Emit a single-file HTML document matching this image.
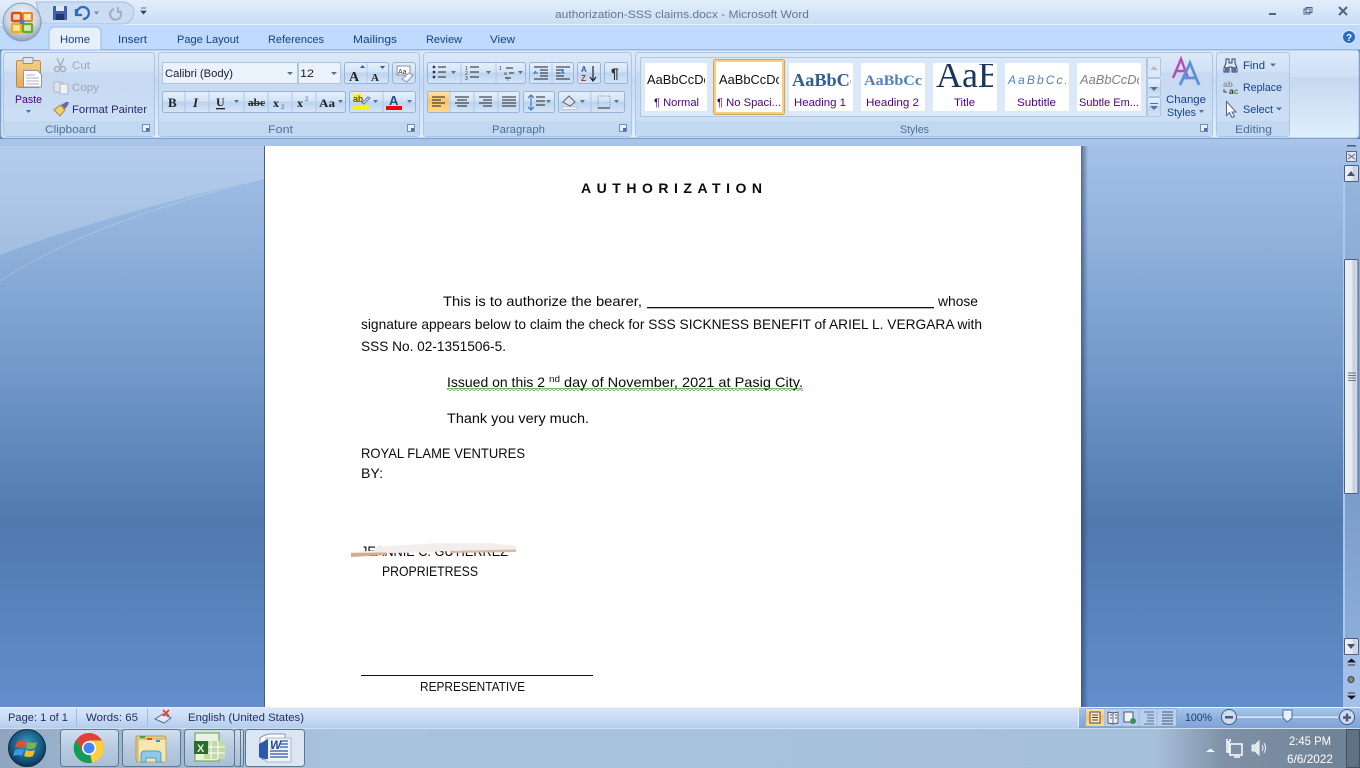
<!DOCTYPE html>
<html><head><meta charset="utf-8"><title>authorization-SSS claims.docx - Microsoft Word</title>
<style>
html,body{margin:0;padding:0;background:#5d87c0;overflow:hidden}
svg{display:block;position:absolute;left:0;top:0}
text{font-family:"Liberation Sans",sans-serif;white-space:pre}
.r{font-size:11px;fill:#15428b}
.k{font-size:11px;fill:#2a2a6e}
.m{font-size:11px;fill:#4b0082}
.c{font-size:11px;fill:#4d6f9f}
.g{font-size:11px;fill:#9aa6b5}
.d{font-size:14px;fill:#0a0a0a}
.s{font-size:11px;fill:#23305e}
</style></head><body>
<svg width="1360" height="768" viewBox="0 0 1360 768" xmlns="http://www.w3.org/2000/svg">
<defs>
<clipPath id="c1"><rect x="645" y="63" width="60" height="48"/></clipPath>
<clipPath id="c2"><rect x="717" y="63" width="62" height="48"/></clipPath>
<clipPath id="c3"><rect x="789" y="63" width="62" height="48"/></clipPath>
<clipPath id="c4"><rect x="933" y="64" width="60" height="47"/></clipPath>
<clipPath id="c5"><rect x="1005" y="63" width="61" height="48"/></clipPath>
<clipPath id="c6"><rect x="1077" y="63" width="62" height="48"/></clipPath>
<linearGradient id="tb" x1="0" y1="0" x2="0" y2="1"><stop offset="0" stop-color="#e3eefb"/><stop offset="1" stop-color="#c9dcf5"/></linearGradient>
<linearGradient id="bg" x1="0" y1="0" x2="0" y2="1"><stop offset="0" stop-color="#a3c0e8"/><stop offset=".1" stop-color="#98b8e1"/><stop offset=".4" stop-color="#7299c9"/><stop offset=".67" stop-color="#5079af"/><stop offset=".72" stop-color="#527cb3"/><stop offset="1" stop-color="#628ecb"/></linearGradient>
<linearGradient id="track" x1="0" y1="0" x2="0" y2="1"><stop offset="0" stop-color="#94b3dd"/><stop offset=".7" stop-color="#7b9dca"/><stop offset="1" stop-color="#8dadd8"/></linearGradient>
<linearGradient id="rb" x1="0" y1="0" x2="0" y2="1"><stop offset="0" stop-color="#dce9f9"/><stop offset=".3" stop-color="#cfe0f5"/><stop offset=".32" stop-color="#c5d8f0"/><stop offset="1" stop-color="#dff0fb"/></linearGradient>
<linearGradient id="gp" x1="0" y1="0" x2="0" y2="1"><stop offset="0" stop-color="#dbe8f8"/><stop offset=".22" stop-color="#d2e2f6"/><stop offset=".25" stop-color="#c6d9f1"/><stop offset="1" stop-color="#cfe0f5"/></linearGradient>
<linearGradient id="btn" x1="0" y1="0" x2="0" y2="1"><stop offset="0" stop-color="#e6f0fb"/><stop offset=".45" stop-color="#d3e3f7"/><stop offset=".5" stop-color="#bdd3ee"/><stop offset="1" stop-color="#d5e5f8"/></linearGradient>
<linearGradient id="org" x1="0" y1="0" x2="0" y2="1"><stop offset="0" stop-color="#fde3a8"/><stop offset=".45" stop-color="#fbc469"/><stop offset="1" stop-color="#fdd98a"/></linearGradient>
<linearGradient id="st" x1="0" y1="0" x2="0" y2="1"><stop offset="0" stop-color="#dbe8f9"/><stop offset=".5" stop-color="#c9dcf5"/><stop offset="1" stop-color="#b4cdee"/></linearGradient>
<linearGradient id="st2" x1="0" y1="0" x2="0" y2="1"><stop offset="0" stop-color="#a9c4e8"/><stop offset=".5" stop-color="#8fb0dd"/><stop offset="1" stop-color="#7fa3d6"/></linearGradient>
<linearGradient id="task" x1="0" y1="0" x2="1" y2="0"><stop offset="0" stop-color="#8ea5bd"/><stop offset=".05" stop-color="#9bb3cd"/><stop offset=".25" stop-color="#a9c2dd"/><stop offset=".85" stop-color="#a7c0da"/><stop offset=".9" stop-color="#7e91a6"/><stop offset="1" stop-color="#6e8093"/></linearGradient>
<linearGradient id="tbtn" x1="0" y1="0" x2="0" y2="1"><stop offset="0" stop-color="#cfdff0"/><stop offset=".5" stop-color="#b7cbe0"/><stop offset="1" stop-color="#a8bfd8"/></linearGradient>
<linearGradient id="thumb" x1="0" y1="0" x2="1" y2="0"><stop offset="0" stop-color="#eef1f7"/><stop offset=".55" stop-color="#e4e9f2"/><stop offset=".65" stop-color="#c6d0de"/><stop offset="1" stop-color="#d6dde9"/></linearGradient>
<linearGradient id="pst" x1="0" y1="0" x2="0" y2="1"><stop offset="0" stop-color="#f5cf86"/><stop offset="1" stop-color="#e8a957"/></linearGradient>
<radialGradient id="orb" cx=".5" cy=".35" r=".7"><stop offset="0" stop-color="#f5f7fb"/><stop offset=".6" stop-color="#c9d4e3"/><stop offset="1" stop-color="#8494a8"/></radialGradient>
<radialGradient id="sorb" cx=".5" cy=".4" r=".6"><stop offset="0" stop-color="#3f9cc4"/><stop offset=".7" stop-color="#15577f"/><stop offset="1" stop-color="#0c3352"/></radialGradient>
<pattern id="sq" width="4" height="3" patternUnits="userSpaceOnUse"><path d="M0 2.500L2 .5L4 2.500" fill="none" stroke="#3f9a3f" stroke-width="1"/></pattern>
<linearGradient id="shd" x1="0" y1="0" x2="1" y2="0"><stop offset="0" stop-color="#2c4060" stop-opacity=".65"/><stop offset="1" stop-color="#2c4060" stop-opacity="0"/></linearGradient>
</defs>

<!-- title and tabs -->
<rect width="1360" height="25" fill="url(#tb)"/>
<rect y="24" width="1360" height="1" fill="#e6f0fc"/>
<rect y="25" width="1360" height="25" fill="#bfdafc"/>
<rect y="49" width="1360" height="1" fill="#8db2e3"/>
<rect x="1" y="50" width="1358" height="88" rx="3" fill="url(#rb)" stroke="#9cbde8"/>
<rect y="139" width="1360" height="7" fill="#a9c4e8"/>

<text x="555" y="18" font-size="11" fill="#66758c" textLength="254" lengthAdjust="spacingAndGlyphs">authorization-SSS claims.docx - Microsoft Word</text>

<!-- window buttons -->
<rect x="1269" y="13" width="7" height="2" fill="#4e6684"/>
<rect x="1304" y="9" width="6" height="5" fill="none" stroke="#4e6684"/><rect x="1306" y="7.500" width="6" height="5" fill="none" stroke="#4e6684"/>
<path d="M1339 7L1347 15M1347 7L1339 15" stroke="#4e6684" stroke-width="2"/>
<circle cx="1349" cy="37" r="6.500" fill="#2a6cc4" stroke="#d8e6f8"/><text x="1346" y="41" font-size="10" font-weight="bold" fill="#fff">?</text>

<!-- quick access -->
<path d="M36 2H122a12 10 0 0 1 12 10a12 12 0 0 1-12 12H42Z" fill="#cbdcf3" stroke="#a5c0e2"/>
<rect x="53" y="6" width="14" height="14" rx="1" fill="#3f5fa8"/><rect x="56" y="6" width="8" height="5" fill="#dfe8f5"/><rect x="56" y="14" width="8" height="6" fill="#22356b"/>
<path d="M77 14a6 6 0 1 1 6 5M76 9v6h6" fill="none" stroke="#2f6ac0" stroke-width="2.200"/>
<path d="M94 11.500h5l-2.500 3Z" fill="#6b83a4"/>
<path d="M120 11a5.500 5.500 0 1 1-6-2M118 7v5h4" fill="none" stroke="#9db0c8" stroke-width="2"/>
<path d="M141 8h5M141 11h5l-2.500 3Z" fill="#2f4770" stroke="#2f4770" stroke-width=".8"/>

<!-- office button -->
<circle cx="22" cy="22" r="19" fill="url(#orb)" stroke="#8a9ab0"/>
<rect x="12" y="13" width="9" height="8" rx="1" fill="#f7d7b0" stroke="#d9501e" stroke-width="2.400"/>
<rect x="23" y="13" width="9" height="8" rx="1" fill="#fbe3b5" stroke="#e8871a" stroke-width="2"/>
<rect x="12" y="24" width="9" height="8" rx="1" fill="#fbe8a8" stroke="#efb01c" stroke-width="2.400"/>
<rect x="23" y="24" width="9" height="8" rx="1" fill="#d5e8b0" stroke="#6aa82c" stroke-width="2.200"/>
<circle cx="22" cy="22" r="2.500" fill="#3c82c8"/>

<!-- tabs -->
<path d="M49 50V32a5 5 0 0 1 5-5h42a5 5 0 0 1 5 5v18Z" fill="#e5f0fb" stroke="#98bbe6"/>
<text class="r" x="60" y="43" textLength="30" lengthAdjust="spacingAndGlyphs">Home</text>
<text class="r" x="118" y="43" textLength="29" lengthAdjust="spacingAndGlyphs">Insert</text>
<text class="r" x="177" y="43" textLength="62" lengthAdjust="spacingAndGlyphs">Page Layout</text>
<text class="r" x="268" y="43" textLength="56" lengthAdjust="spacingAndGlyphs">References</text>
<text class="r" x="353" y="43" textLength="44" lengthAdjust="spacingAndGlyphs">Mailings</text>
<text class="r" x="426" y="43" textLength="36" lengthAdjust="spacingAndGlyphs">Review</text>
<text class="r" x="490" y="43" textLength="25" lengthAdjust="spacingAndGlyphs">View</text>

<!-- groups -->
<g stroke="#a9c7e8" fill="url(#gp)">
<rect x="3.500" y="52.500" width="151" height="84" rx="3"/>
<rect x="158.500" y="52.500" width="261" height="84" rx="3"/>
<rect x="423.500" y="52.500" width="208" height="84" rx="3"/>
<rect x="635.500" y="52.500" width="577" height="84" rx="3"/>
<rect x="1216.500" y="52.500" width="73" height="84" rx="3"/>
</g>
<g fill="#c2d8f0">
<rect x="4" y="121" width="150" height="15"/><rect x="159" y="121" width="260" height="15"/><rect x="424" y="121" width="207" height="15"/><rect x="636" y="121" width="576" height="15"/><rect x="1217" y="121" width="72" height="15"/>
</g>
<text class="c" x="45" y="133" textLength="51" lengthAdjust="spacingAndGlyphs">Clipboard</text>
<text class="c" x="268" y="133" textLength="25" lengthAdjust="spacingAndGlyphs">Font</text>
<text class="c" x="492" y="133" textLength="53" lengthAdjust="spacingAndGlyphs">Paragraph</text>
<text class="c" x="900" y="133" textLength="29" lengthAdjust="spacingAndGlyphs">Styles</text>
<text class="c" x="1235" y="133" textLength="37" lengthAdjust="spacingAndGlyphs">Editing</text>
<g fill="#e8f0fa" stroke="#6f8fb8">
<rect x="142.500" y="124.500" width="7" height="7"/><rect x="407.500" y="124.500" width="7" height="7"/><rect x="619.500" y="124.500" width="7" height="7"/><rect x="1200.500" y="124.500" width="7" height="7"/>
</g>
<g fill="#4f6f9c"><rect x="146" y="128" width="3" height="3"/><rect x="411" y="128" width="3" height="3"/><rect x="623" y="128" width="3" height="3"/><rect x="1204" y="128" width="3" height="3"/></g>

<!-- clipboard -->
<rect x="16.500" y="60.500" width="24" height="27" rx="2" fill="url(#pst)" stroke="#b88a45"/>
<rect x="23" y="57.500" width="10" height="6" rx="1" fill="#e2e6ec" stroke="#8a8f99"/>
<path d="M23.500 70.500h14l4 4v12.500h-18Z" fill="#fff" stroke="#8e97a6"/>
<path d="M26 75h9M26 78h13M26 81h13M26 84h13" stroke="#aab2be"/>
<text class="m" x="15" y="103" textLength="27" lengthAdjust="spacingAndGlyphs">Paste</text>
<path d="M26 110h5l-2.500 3Z" fill="#4d6f9f"/>
<path d="M57 58l4 9M64 58l-4 9" stroke="#a6aebb" stroke-width="1.400"/><circle cx="57" cy="69" r="2.500" fill="none" stroke="#a6aebb" stroke-width="1.400"/><circle cx="63" cy="69" r="2.500" fill="none" stroke="#a6aebb" stroke-width="1.400"/>
<text class="g" x="72" y="69" textLength="18" lengthAdjust="spacingAndGlyphs">Cut</text>
<rect x="54" y="82" width="8" height="10" fill="#e0e6ef" stroke="#adb6c3"/><rect x="60" y="84" width="8" height="10" fill="#eef1f6" stroke="#adb6c3"/>
<text class="g" x="72" y="91" textLength="27" lengthAdjust="spacingAndGlyphs">Copy</text>
<path d="M54 110l6-5 5 5-5 6q-3-3-6-6Z" fill="#edd27a" stroke="#a98c3c"/><path d="M61 105l5-3 3 0-1 3-3 4Z" fill="#6a67a8"/>
<text class="k" x="72" y="113" textLength="75" lengthAdjust="spacingAndGlyphs">Format Painter</text>

<!-- font -->
<rect x="162.500" y="62.500" width="135" height="21" fill="#eaf2fc" stroke="#adc6e5"/>
<rect x="298.500" y="62.500" width="42" height="21" fill="#eaf2fc" stroke="#adc6e5"/>
<text x="165" y="77" font-size="11" fill="#1b1b3c" textLength="68" lengthAdjust="spacingAndGlyphs">Calibri (Body)</text>
<text x="300" y="77" font-size="11" fill="#1b1b3c" textLength="14" lengthAdjust="spacingAndGlyphs">12</text>
<path d="M287 72h6l-3 3ZM331 72h6l-3 3Z" fill="#56708f"/>
<rect x="344.500" y="62.500" width="44" height="21" rx="2" fill="url(#btn)" stroke="#97b4d9"/>
<line x1="367" y1="63" x2="367" y2="83" stroke="#adc6e5"/>
<text x="349" y="81" font-size="14" font-weight="bold" style="font-family:'Liberation Serif',serif" fill="#222">A</text>
<text x="371" y="81" font-size="11" font-weight="bold" style="font-family:'Liberation Serif',serif" fill="#222">A</text>
<path d="M360 68h5l-2.500-3ZM380 66h5l-2.500 3Z" fill="#335b92"/>
<rect x="392.500" y="62.500" width="23" height="21" rx="3" fill="url(#btn)" stroke="#97b4d9"/>
<rect x="397" y="66" width="13" height="9" fill="#fff" stroke="#8791a0"/><text x="398" y="74" font-size="7" fill="#333">Aa</text>
<path d="M402 79l7-6 4 2-6 7Z" fill="#f3f5f8" stroke="#8f9aa8"/>

<rect x="162.500" y="91.500" width="183" height="21" rx="2" fill="url(#btn)" stroke="#97b4d9"/>
<g stroke="#adc6e5"><line x1="185" y1="92" x2="185" y2="112"/><line x1="209" y1="92" x2="209" y2="112"/><line x1="244" y1="92" x2="244" y2="112"/><line x1="268" y1="92" x2="268" y2="112"/><line x1="292" y1="92" x2="292" y2="112"/><line x1="316" y1="92" x2="316" y2="112"/></g>
<g fill="#222">
<text x="168" y="107" font-size="13" font-weight="bold" style="font-family:'Liberation Serif',serif">B</text>
<text x="193" y="107" font-size="13" font-weight="bold" font-style="italic" style="font-family:'Liberation Serif',serif">I</text>
<text x="216" y="106" font-size="12" font-weight="bold" style="font-family:'Liberation Serif',serif">U</text>
<text x="248" y="106" font-size="11" font-weight="bold" style="font-family:'Liberation Serif',serif" textLength="17" lengthAdjust="spacingAndGlyphs">abc</text>
<text x="273" y="107" font-size="12" font-weight="bold" style="font-family:'Liberation Serif',serif">x</text>
<text x="281" y="109" font-size="6" fill="#3a5f9a">2</text>
<text x="297" y="107" font-size="12" font-weight="bold" style="font-family:'Liberation Serif',serif">x</text>
<text x="305" y="101" font-size="6" fill="#3a5f9a">2</text>
<text x="319" y="107" font-size="12" font-weight="bold" style="font-family:'Liberation Serif',serif" textLength="16" lengthAdjust="spacingAndGlyphs">Aa</text>
</g>
<rect x="216" y="108" width="9" height="1.300" fill="#222"/><rect x="248" y="103" width="17" height="1" fill="#333"/>
<path d="M234 100h5l-2.500 3ZM338 100h5l-2.500 3Z" fill="#56708f"/>
<rect x="349.500" y="91.500" width="66" height="21" rx="2" fill="url(#btn)" stroke="#97b4d9"/>
<line x1="383" y1="92" x2="383" y2="112" stroke="#adc6e5"/>
<rect x="353" y="94" width="9" height="8" fill="#f6ee4a"/><text x="353" y="102" font-size="9" fill="#222">ab</text><path d="M362 103l6-6 2 1-6 6Z" fill="#dfe5ee" stroke="#6b7c95"/>
<rect x="353" y="106" width="16" height="4" fill="#f5f500"/>
<path d="M373 100h5l-2.500 3ZM407 100h5l-2.500 3Z" fill="#56708f"/>
<text x="389" y="105" font-size="13" font-weight="bold" fill="#1f4a8c">A</text>
<rect x="386" y="106" width="16" height="4" fill="#f00"/>

<!-- paragraph -->
<rect x="427.500" y="62.500" width="98" height="21" rx="2" fill="url(#btn)" stroke="#97b4d9"/>
<line x1="461" y1="63" x2="461" y2="83" stroke="#adc6e5"/><line x1="496" y1="63" x2="496" y2="83" stroke="#adc6e5"/>
<g fill="#1f3864"><circle cx="434" cy="67" r="1.400"/><circle cx="434" cy="72" r="1.400"/><circle cx="434" cy="77" r="1.400"/></g>
<path d="M438 67h8M438 72h8M438 77h8M470 67h9M470 72h9M470 77h9M506 68h7M509 73h5M505 78h6" stroke="#222" stroke-width="1.100"/>
<text x="465" y="70" font-size="5" fill="#334">1</text><text x="465" y="75" font-size="5" fill="#334">2</text><text x="465" y="80" font-size="5" fill="#334">3</text>
<text x="499" y="70" font-size="5" fill="#334">1</text><text x="504" y="75" font-size="5" fill="#334">a</text><text x="507" y="81" font-size="5" fill="#334">i</text>
<path d="M451 71h5l-2.500 3ZM486 71h5l-2.500 3ZM518 71h5l-2.500 3Z" fill="#56708f"/>
<rect x="529.500" y="62.500" width="44" height="21" rx="2" fill="url(#btn)" stroke="#97b4d9"/><line x1="552" y1="63" x2="552" y2="83" stroke="#adc6e5"/>
<path d="M534 67h14M540 70h8M540 73h8M540 76h8M534 79h14M556 67h14M556 70h8M556 73h8M556 76h8M556 79h14" stroke="#222" stroke-width="1.100"/>
<path d="M538 73h-4l2-2M560 73h4l-2-2" stroke="#2a6cc4" fill="none"/>
<rect x="577.500" y="62.500" width="23" height="21" rx="2" fill="url(#btn)" stroke="#97b4d9"/>
<text x="581" y="72" font-size="8" font-weight="bold" fill="#2a5fb0">A</text><text x="581" y="81" font-size="8" font-weight="bold" fill="#9d3a2b">Z</text>
<path d="M593 66v14M590 77l3 4 3-4" fill="none" stroke="#222" stroke-width="1.200"/>
<rect x="604.500" y="62.500" width="23" height="21" rx="2" fill="url(#btn)" stroke="#97b4d9"/>
<text x="611" y="78" font-size="14" font-weight="bold" fill="#333">¶</text>

<rect x="427.500" y="91.500" width="92" height="21" rx="2" fill="url(#btn)" stroke="#97b4d9"/>
<rect x="428" y="92" width="21" height="20" fill="url(#org)"/>
<path d="M432 97h13M432 100h9M432 103h13M432 106h9" stroke="#222"/>
<path d="M455 97h14M457 100h10M455 103h14M457 106h10" stroke="#222"/>
<path d="M479 97h13M483 100h9M479 103h13M483 106h9" stroke="#222"/>
<path d="M502 97h14M502 100h14M502 103h14M502 106h14" stroke="#222"/>
<line x1="450" y1="92" x2="450" y2="112" stroke="#adc6e5"/><line x1="474" y1="92" x2="474" y2="112" stroke="#adc6e5"/><line x1="498" y1="92" x2="498" y2="112" stroke="#adc6e5"/>
<rect x="523.500" y="91.500" width="31" height="21" rx="2" fill="url(#btn)" stroke="#97b4d9"/>
<path d="M531 95v15M528 98l3-3 3 3M528 107l3 3 3-3" fill="none" stroke="#2a6cc4"/><path d="M536 97h9M536 101h9M536 105h9" stroke="#222"/>
<path d="M546 100h5l-2.500 3Z" fill="#56708f"/>
<rect x="558.500" y="91.500" width="66" height="21" rx="2" fill="url(#btn)" stroke="#97b4d9"/><line x1="591" y1="92" x2="591" y2="112" stroke="#adc6e5"/>
<path d="M563 102l6-6 6 6-5 4Z" fill="#dfe5ee" stroke="#5a6676"/><rect x="562" y="107" width="15" height="2.500" fill="#fff" stroke="#9aa6b5" stroke-width=".6"/>
<path d="M580 100h5l-2.500 3ZM614 100h5l-2.500 3Z" fill="#56708f"/>
<rect x="598" y="96" width="12" height="12" fill="none" stroke="#8a94a2" stroke-dasharray="1 1"/><line x1="598" y1="108" x2="610" y2="108" stroke="#222"/>

<!-- styles -->
<rect x="640.500" y="57.500" width="506" height="59" fill="#dbe8f8" stroke="#adc6e5"/>
<g fill="#fff">
<rect x="645" y="63" width="62" height="48"/><rect x="789" y="63" width="64" height="48"/><rect x="861" y="63" width="64" height="48"/><rect x="933" y="63" width="64" height="48"/><rect x="1005" y="63" width="64" height="48"/><rect x="1077" y="63" width="64" height="48"/>
</g>
<rect x="713.500" y="59.500" width="71" height="55" rx="2" fill="#fff" stroke="#c9a560" stroke-width="1"/>
<rect x="715" y="61" width="68" height="52" rx="1" fill="none" stroke="#fbcf78" stroke-width="2"/>
<text x="647" y="84" font-size="12.500" fill="#111" textLength="63" lengthAdjust="spacingAndGlyphs" clip-path="url(#c1)">AaBbCcDc</text>
<text x="719" y="84" font-size="12.500" fill="#111" textLength="63" lengthAdjust="spacingAndGlyphs" clip-path="url(#c2)">AaBbCcDc</text>
<text x="792" y="86" font-size="18" font-weight="bold" fill="#2f5d96" style="font-family:'Liberation Serif',serif" textLength="66" lengthAdjust="spacingAndGlyphs" clip-path="url(#c3)">AaBbCc</text>
<text x="864" y="85" font-size="15" font-weight="bold" fill="#4f81bd" style="font-family:'Liberation Serif',serif" textLength="58" lengthAdjust="spacingAndGlyphs">AaBbCc</text>
<text x="936" y="87" font-size="36" fill="#17365d" style="font-family:'Liberation Serif',serif" clip-path="url(#c4)">AaB</text>
<text x="1008" y="84" font-size="12" font-style="italic" fill="#4f81bd" textLength="60" clip-path="url(#c5)">AaBbCc.</text>
<text x="1080" y="84" font-size="12.500" font-style="italic" fill="#7f7f7f" textLength="63" lengthAdjust="spacingAndGlyphs" clip-path="url(#c6)">AaBbCcDc</text>
<text class="m" x="654" y="106" textLength="45" lengthAdjust="spacingAndGlyphs">¶ Normal</text>
<text class="m" x="717" y="106" textLength="64" lengthAdjust="spacingAndGlyphs">¶ No Spaci...</text>
<text class="m" x="794" y="106" textLength="52" lengthAdjust="spacingAndGlyphs">Heading 1</text>
<text class="m" x="866" y="106" textLength="53" lengthAdjust="spacingAndGlyphs">Heading 2</text>
<text class="m" x="954" y="106" textLength="21" lengthAdjust="spacingAndGlyphs">Title</text>
<text class="m" x="1017" y="106" textLength="39" lengthAdjust="spacingAndGlyphs">Subtitle</text>
<text class="m" x="1079" y="106" textLength="60" lengthAdjust="spacingAndGlyphs">Subtle Em...</text>
<rect x="1147.500" y="57.500" width="13" height="20" rx="2" fill="#dbe8f8" stroke="#adc6e5"/>
<rect x="1147.500" y="78.500" width="13" height="18" rx="2" fill="url(#btn)" stroke="#adc6e5"/>
<rect x="1147.500" y="97.500" width="13" height="19" rx="2" fill="url(#btn)" stroke="#adc6e5"/>
<path d="M1150 70h8l-4-4Z" fill="#b4bfcd"/><path d="M1150 87h8l-4 4Z" fill="#56708f"/><path d="M1150 103h8v1h-8ZM1150 106h8l-4 4Z" fill="#56708f"/>
<path d="M1173 78L1181 59L1188 78M1176 71h9" fill="none" stroke="#b44fb4" stroke-width="2.500"/>
<path d="M1180 85L1190 63L1199 85M1183.500 78h13" fill="none" stroke="#5f8fd4" stroke-width="2.800"/>
<text class="r" x="1166" y="103" textLength="40" lengthAdjust="spacingAndGlyphs">Change</text>
<text class="r" x="1167" y="116" textLength="29" lengthAdjust="spacingAndGlyphs">Styles</text>
<path d="M1199 110h5l-2.500 3Z" fill="#4d6f9f"/>

<!-- editing -->
<path d="M1226 59h3v4h3v-4h3v4l2 5v4h-5v-5h-3v5h-5v-4l2-5Z" fill="#dfe8f5" stroke="#2f3f66" stroke-width="1"/>
<rect x="1225" y="67" width="4" height="5" fill="#5c6f96"/><rect x="1232" y="67" width="4" height="5" fill="#5c6f96"/>
<text class="r" x="1243" y="69" textLength="22" lengthAdjust="spacingAndGlyphs">Find</text>
<path d="M1270 63.500h6l-3 3Z" fill="#4d6f9f"/>
<text x="1223" y="87" font-size="8.500" font-weight="bold" fill="#8b8f95">ab</text><text x="1229" y="94" font-size="8.500" font-weight="bold" fill="#333">a<tspan fill="#2b9d2b">c</tspan></text>
<path d="M1224 89v3h3" fill="none" stroke="#444"/>
<text class="r" x="1243" y="91" textLength="39" lengthAdjust="spacingAndGlyphs">Replace</text>
<path d="M1226.500 101.500v14l3-3 2.500 5 2.500-1-2.500-4.500h4Z" fill="#fff" stroke="#55647d"/>
<text class="r" x="1243" y="113" textLength="30" lengthAdjust="spacingAndGlyphs">Select</text>
<path d="M1276 107.500h6l-3 3Z" fill="#4d6f9f"/>

<!-- workspace background -->
<rect x="0" y="146" width="1343" height="561" fill="url(#bg)"/>
<path d="M0 146H265V178C170 200 80 225 0 255Z" fill="#fff" fill-opacity=".2"/>
<path d="M0 281C70 235 160 205 265 178" fill="none" stroke="#fff" stroke-opacity=".2"/>
<rect x="264" y="146" width="1" height="561" fill="#555d68"/>
<rect x="1081" y="146" width="7" height="561" fill="url(#shd)"/>
<rect x="265" y="146" width="816" height="561" fill="#fff"/>

<!-- document -->
<text class="d" x="581" y="193" font-weight="bold" textLength="181" lengthAdjust="spacing">AUTHORIZATION</text>
<text class="d" x="443" y="306" textLength="199" lengthAdjust="spacingAndGlyphs">This is to authorize the bearer,</text>
<rect x="647" y="307" width="287" height="1.300" fill="#111"/>
<text class="d" x="938" y="306" textLength="40" lengthAdjust="spacingAndGlyphs">whose</text>
<text class="d" x="361" y="329" textLength="621" lengthAdjust="spacingAndGlyphs">signature appears below to claim the check for SSS SICKNESS BENEFIT of ARIEL L. VERGARA with</text>
<text class="d" x="361" y="351" textLength="145" lengthAdjust="spacingAndGlyphs">SSS No. 02-1351506-5.</text>
<text class="d" x="447" y="387" textLength="98" lengthAdjust="spacingAndGlyphs">Issued on this 2</text>
<text x="549" y="382" font-size="9" fill="#111" textLength="11" lengthAdjust="spacingAndGlyphs">nd</text>
<text class="d" x="564" y="387" textLength="239" lengthAdjust="spacingAndGlyphs">day of November, 2021 at Pasig City.</text>
<rect x="447" y="388" width="356" height="3" fill="url(#sq)"/>
<text class="d" x="447" y="423" textLength="142" lengthAdjust="spacingAndGlyphs">Thank you very much.</text>
<text class="d" x="361" y="458" textLength="164" lengthAdjust="spacingAndGlyphs">ROYAL FLAME VENTURES</text>
<text class="d" x="361" y="478" textLength="22" lengthAdjust="spacingAndGlyphs">BY:</text>
<text class="d" x="361" y="556" textLength="147" lengthAdjust="spacingAndGlyphs">JEANNIE C. GUTIERREZ</text>
<path d="M375 547L392 546L440 543L490 543L516 546V550L450 551L420 552.500L385 553L375 553Z" fill="#f1eeeb"/>
<path d="M351 552L386 550L386 553L351 553Z" fill="#f1eeeb"/>
<path d="M351 553L386 552.500V555L351 557Z" fill="#d3ab8f"/>
<path d="M450 551L516 549.500V552L450 553Z" fill="#dcb9a0"/>
<text class="d" x="382" y="576" textLength="96" lengthAdjust="spacingAndGlyphs">PROPRIETRESS</text>
<rect x="361" y="675" width="232" height="1" fill="#111"/>
<text x="420" y="691" font-size="12.500" fill="#111" textLength="105" lengthAdjust="spacingAndGlyphs">REPRESENTATIVE</text>

<!-- vertical scrollbar -->
<rect x="1343" y="146" width="17" height="561" fill="#a3c0e8"/>
<rect x="1343" y="181" width="17" height="457" fill="url(#track)"/>
<rect x="1343" y="181" width="2" height="457" fill="#aec8ea"/>
<rect x="1347" y="145" width="9" height="1.500" fill="#47597a"/>
<rect x="1346.500" y="151.500" width="10" height="10" fill="#dfe6f0" stroke="#5a6a84"/>
<path d="M1348 154l7 5M1355 154l-7 5" stroke="#5a6a84"/>
<rect x="1344.500" y="165.500" width="14" height="16" rx="1" fill="url(#thumb)" stroke="#4e5f86"/>
<path d="M1347 176h8l-4-5Z" fill="#44546f"/>
<rect x="1344.500" y="259.500" width="13.500" height="234" rx="1" fill="url(#thumb)" stroke="#4e5f86"/>
<path d="M1348 373h8M1348 375.500h8M1348 378h8M1348 380.500h8" stroke="#6c7688"/>
<rect x="1344.500" y="638.500" width="14" height="16" rx="1" fill="url(#thumb)" stroke="#4e5f86"/>
<path d="M1347 644h8l-4 5Z" fill="#44546f"/>
<path d="M1348 665h7M1348 662l3.500-3 3.500 3Z" fill="#111" stroke="#111" stroke-width=".8"/>
<circle cx="1351" cy="679.500" r="3" fill="#888" stroke="#222" stroke-width=".8"/>
<path d="M1348 693h7M1348 696l3.500 3 3.500-3Z" fill="#111" stroke="#111" stroke-width=".8"/>

<!-- status bar -->
<rect y="707" width="1360" height="21" fill="url(#st)"/>
<rect y="707" width="1360" height="1" fill="#e8f1fc"/>
<rect x="1079" y="708" width="281" height="20" fill="url(#st2)"/>
<text class="s" x="8" y="721" textLength="60" lengthAdjust="spacingAndGlyphs">Page: 1 of 1</text>
<rect x="76" y="708" width="1" height="19" fill="#9ebbe0"/>
<text class="s" x="86" y="721" textLength="52" lengthAdjust="spacingAndGlyphs">Words: 65</text>
<rect x="147" y="708" width="1" height="19" fill="#9ebbe0"/>
<path d="M155 719l8-5 8 4-7 5Z" fill="#e4ebf5" stroke="#5a6f95"/>
<path d="M163 710l6 6M169 710l-6 6" stroke="#e2402b" stroke-width="1.700"/>
<text class="s" x="188" y="721" textLength="116" lengthAdjust="spacingAndGlyphs">English (United States)</text>
<rect x="1078" y="708" width="1" height="19" fill="#eaf2fc"/>
<rect x="1085.500" y="708.500" width="91" height="18" rx="2" fill="#b8cfee" stroke="#8baad6"/>
<rect x="1086" y="709" width="18" height="17" fill="url(#org)"/>
<rect x="1090" y="712" width="10" height="11" fill="#fbe9c4" stroke="#4a4a4a"/><path d="M1092 715h6M1092 717.500h6M1092 720h6" stroke="#444"/>
<path d="M1108 712l5 1 5-1v11l-5 1-5-1ZM1113 713v11M1110 715h2M1110 718h2M1115 715h2M1115 718h2" fill="#eef3fa" stroke="#4a5568" stroke-width=".9"/>
<rect x="1124" y="712" width="9" height="10" fill="#eef3fa" stroke="#4a5568"/><circle cx="1133" cy="721" r="3" fill="#3a8f5c"/>
<path d="M1144 712h10M1147 715h7M1147 718h7M1147 721h7M1144 724h10" stroke="#60708a"/>
<path d="M1162 712h11M1162 715h11M1162 718h11M1162 721h11M1162 724h11" stroke="#4a5568"/>
<line x1="1105" y1="709" x2="1105" y2="726" stroke="#a2bde2"/><line x1="1122" y1="709" x2="1122" y2="726" stroke="#a2bde2"/><line x1="1139" y1="709" x2="1139" y2="726" stroke="#a2bde2"/><line x1="1157" y1="709" x2="1157" y2="726" stroke="#a2bde2"/>
<text x="1185" y="721" font-size="11" fill="#1c3a78" textLength="27" lengthAdjust="spacingAndGlyphs">100%</text>
<rect x="1237" y="716.500" width="101" height="1.500" fill="#dfe9f7"/>
<circle cx="1229" cy="717" r="7.500" fill="#cfdcef" stroke="#3c5c8c"/><rect x="1225" y="716" width="8" height="2.500" fill="#4a5c78"/>
<circle cx="1347" cy="717" r="7.500" fill="#cfdcef" stroke="#3c5c8c"/><path d="M1343 717.500h8M1347 713.500v8" stroke="#4a5c78" stroke-width="2.500"/>
<path d="M1283 710h9v8l-4.500 4-4.500-4Z" fill="#e8eef7" stroke="#4d6a98"/>

<!-- taskbar -->
<rect y="728" width="1360" height="40" fill="url(#task)"/>
<rect y="728" width="1360" height="1" fill="#d2dfee"/>
<circle cx="27" cy="748" r="18.500" fill="url(#sorb)" stroke="#0e2a45"/>
<path d="M17 742q5-3 9 0l-2 6q-4-2-9 0Z" fill="#e2502c"/>
<path d="M28 742q4 2 9 0l-2 6q-4 2-9 0Z" fill="#7db83a"/>
<path d="M15 750q5-2 9 0l-2 6q-4-2-9 0Z" fill="#3b9ae0"/>
<path d="M26 750q4 2 9 0l-2 6q-4 2-9 0Z" fill="#f0c020"/>
<g fill="url(#tbtn)" stroke="#5f7890">
<rect x="60.500" y="729.500" width="58" height="37" rx="3"/>
<rect x="122.500" y="729.500" width="58" height="37" rx="3"/>
<rect x="237.500" y="729.500" width="6" height="37" rx="2"/>
<rect x="234.500" y="729.500" width="6" height="37" rx="2"/>
<rect x="184.500" y="729.500" width="50" height="37" rx="3"/>
</g>
<rect x="245.500" y="729.500" width="59" height="37" rx="3" fill="#dbe6f2" stroke="#5f7890"/>
<!-- chrome -->
<circle cx="89" cy="748" r="15" fill="#db4437"/>
<path d="M89 748L76 756A15 15 0 0 0 92 762.700Z" fill="#0f9d58"/>
<path d="M89 748L92 762.700A15 15 0 0 0 102 740.500L89 740.500Z" fill="#ffcd40"/>
<path d="M76 756A15 15 0 0 1 76 740L82.500 751.500Z" fill="#0f9d58"/>
<circle cx="89" cy="748" r="7" fill="#fff"/><circle cx="89" cy="748" r="5.500" fill="#4285f4"/>
<!-- explorer -->
<rect x="136" y="736" width="30" height="26" rx="2" fill="#e9cf86" stroke="#b79b55"/>
<rect x="138" y="739" width="28" height="23" fill="#f6e7ae" stroke="#c7aa62"/>
<rect x="140" y="736" width="5" height="2" fill="#3aa04a"/><rect x="147" y="738" width="5" height="2" fill="#d9503a"/><rect x="156" y="740" width="4" height="2" fill="#3a8ad9"/>
<path d="M141 762v-7q0-4 4-4h12q4 0 4 4v7h-5v-4h-10v4Z" fill="#8fcbe8" stroke="#4f9cc7"/>
<!-- excel -->
<rect x="195" y="733" width="24" height="28" fill="#e9f2e2" stroke="#6aa23f"/>
<rect x="204" y="741" width="21" height="18" fill="#c3d9a8"/>
<path d="M204 747h21M204 753h21M211 741v18M218 741v18" stroke="#fff"/>
<rect x="194" y="741" width="14" height="13" fill="#2e6b2e"/>
<text x="197" y="752" font-size="11" font-weight="bold" fill="#dff0d5">X</text>
<!-- word -->
<path d="M260 738q5-4 11-4h14v26h-18q-7 0-7-6Z" fill="#fff" stroke="#7d97c7"/>
<rect x="266" y="738" width="25" height="24" fill="#f0f3f9" stroke="#a9b6cc"/>
<path d="M259 744l9-5v20q-6 0-9-2Z" fill="#2a5aa8"/>
<text x="270" y="749" font-size="12" font-weight="bold" font-style="italic" fill="#1f4a9a">W</text>
<path d="M280 741h8M280 744h8M280 747h8M270 751h18M270 754h18M270 757h18" stroke="#2a5aa8" stroke-width="1.300"/>
<!-- tray -->
<path d="M1206 752l4.500-3.500 4.500 3.500Z" fill="#eef3f8"/>
<rect x="1230" y="744" width="12" height="11" fill="none" stroke="#fff" stroke-width="1.500"/>
<path d="M1229 742v10h-2v-10h2M1227 742v-3M1230 742v-3M1234 757h6" stroke="#fff" stroke-width="1.500" fill="none"/>
<path d="M1252 745h3l4-4v14l-4-4h-3Z" fill="#dfe6ed" stroke="#eef3f8"/>
<path d="M1262 745q2 3 0 6M1264 743q3 5 0 10" fill="none" stroke="#eef3f8"/>
<text x="1289" y="745" font-size="12" fill="#fff" textLength="42" lengthAdjust="spacingAndGlyphs">2:45 PM</text>
<text x="1287" y="763" font-size="12" fill="#fff" textLength="46" lengthAdjust="spacingAndGlyphs">6/6/2022</text>
<rect x="1346.500" y="729.500" width="13" height="38" fill="#5f7285" stroke="#42525f"/>
</svg>
</body></html>
